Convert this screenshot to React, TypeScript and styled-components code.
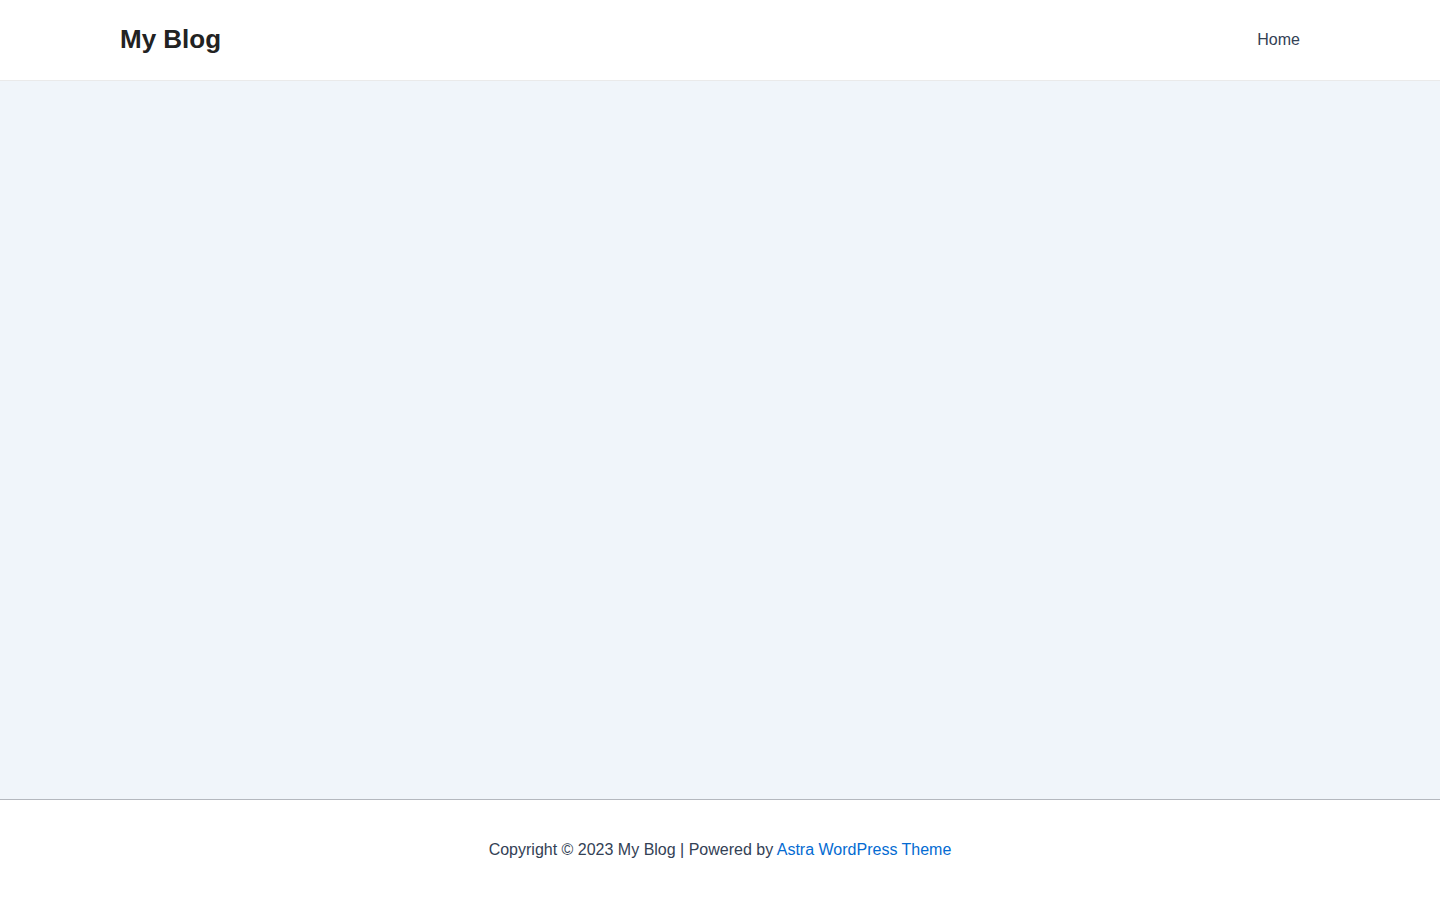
import React from "react";
import styled, { createGlobalStyle } from "styled-components";

const Global = createGlobalStyle`
  html, body { margin: 0; padding: 0; }
  body { font-family: "Liberation Sans", Arial, sans-serif; color: #334155; background: #fff; }
  * { box-sizing: border-box; }
`;

const Page = styled.div`
  min-height: 900px;
  display: flex;
  flex-direction: column;
`;

const Header = styled.header`
  height: 81px;
  background: #fff;
  border-bottom: 1px solid #eaeaea;
  display: flex;
  align-items: center;
  justify-content: space-between;
  padding: 0 140px 1px 120px;
`;

const Title = styled.a`
  font-size: 26px;
  font-weight: 700;
  color: #222222;
  text-decoration: none;
  line-height: 1;
  padding-bottom: 2px;
`;

const Nav = styled.nav`
  display: flex;
  gap: 20px;
`;

const NavLink = styled.a`
  font-size: 16px;
  color: #334155;
  text-decoration: none;
`;

const Main = styled.main`
  flex: 1;
  background: #f0f5fa;
`;

const Footer = styled.footer`
  height: 101px;
  border-top: 1px solid #b4b8be;
  background: #fff;
  display: flex;
  align-items: center;
  justify-content: center;
  font-size: 16px;
  color: #334155;
`;

const Link = styled.a`
  color: #046bd2;
  text-decoration: none;
`;

export default function App() {
  return (
    <>
      <Global />
      <Page>
        <Header>
          <Title href="#">My Blog</Title>
          <Nav>
            <NavLink href="#">Home</NavLink>
          </Nav>
        </Header>
        <Main />
        <Footer>
          <span>
            Copyright © 2023 My Blog | Powered by <Link href="#">Astra WordPress Theme</Link>
          </span>
        </Footer>
      </Page>
    </>
  );
}
